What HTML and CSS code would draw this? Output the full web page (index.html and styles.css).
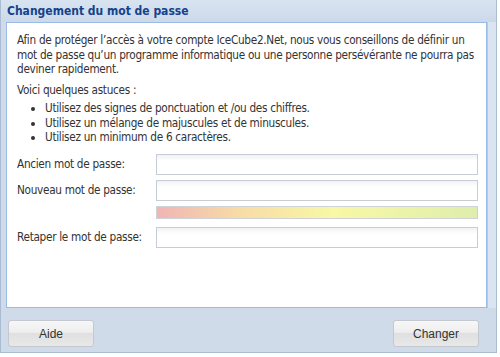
FILE: index.html
```html
<!DOCTYPE html>
<html lang="fr">
<head>
  <meta charset="UTF-8">
  <title>Changement du mot de passe</title>
  <link rel="stylesheet" href="styles.css">
</head>
<body>
  <div class="window">
    <div class="title">Changement du mot de passe</div>
    <div class="frame">
      <div class="content">
        <p class="intro">Afin de protéger l’accès à votre compte IceCube2.Net, nous vous conseillons de définir un mot de passe qu’un programme informatique ou une personne persévérante ne pourra pas deviner rapidement.</p>
        <p class="tips">Voici quelques astuces :</p>
        <ul>
          <li>Utilisez des signes de ponctuation et /ou des chiffres.</li>
          <li>Utilisez un mélange de majuscules et de minuscules.</li>
          <li>Utilisez un minimum de 6 caractères.</li>
        </ul>
        <div class="form">
          <label>Ancien mot de passe:</label>
          <input type="password">
          <label>Nouveau mot de passe:</label>
          <input type="password">
          <span></span>
          <div class="strength"></div>
          <label>Retaper le mot de passe:</label>
          <input type="password">
        </div>
      </div>
      <div class="side"></div>
    </div>
    <div class="buttons">
      <button>Aide</button>
      <button>Changer</button>
    </div>
  </div>
</body>
</html>
```

FILE: styles.css
```css
body {
  margin: 0;
  background: #ffffff;
  font-family: "DejaVu Sans Condensed", "DejaVu Sans", sans-serif;
  font-size: 11.7px;
  color: #333;
}
.window {
  width: 495px;
  height: 352px;
  background: #cfdbe8;
  border: 1px solid #a9bcd3;
  border-top: none;
  display: flex;
  flex-direction: column;
}
.title {
  height: 22px;
  line-height: 22px;
  padding-left: 6px;
  font-size: 12px;
  font-weight: bold;
  color: #15428b;
  background: linear-gradient(#d9e4f1, #ccd9e8);
}
.frame {
  display: flex;
  height: 286px;
  padding-left: 5px;
}
.content {
  width: 470px;
  background: #fff;
  border: 1px solid #99bbe8;
  padding: 10px 0 0 10px;
}
.side {
  width: 8px;
  background: #dbe5f1;
  border-left: 1px solid #b5c9e2;
}
p {
  margin: 0;
  line-height: 14.5px;
  letter-spacing: -0.3px;
}
.tips {
  margin-top: 6px;
}
ul {
  margin: 4px 0 0;
  padding-left: 28px;
  line-height: 14.5px;
  letter-spacing: -0.3px;
}
.form {
  margin-top: 9px;
  display: grid;
  grid-template-columns: 139px 322px;
  row-gap: 5px;
  align-items: center;
}
label {
  letter-spacing: -0.3px;
}
input {
  box-sizing: border-box;
  height: 21px;
  margin: 0;
  border: 1px solid #c8ccd6;
  background: linear-gradient(#f1f2f4, #ffffff 6px);
}
.strength {
  height: 11px;
  margin-bottom: 3px;
  border: 1px solid #cfd3d8;
  background: linear-gradient(90deg, #f0b5b5, #f7dba6 25%, #f8f8a6 55%, #dfeeac);
}
.buttons {
  display: flex;
  justify-content: space-between;
  padding: 12px 17px 0 7px;
}
button {
  width: 86px;
  height: 27px;
  font-family: "Liberation Sans", Arial, sans-serif;
  font-size: 12px;
  color: #333;
  border: 1px solid #c4c9cf;
  border-radius: 3px;
  background: linear-gradient(#f7f7f7, #eeeeee 45%, #e0e0e0 50%, #e8e8e8);
}
```
